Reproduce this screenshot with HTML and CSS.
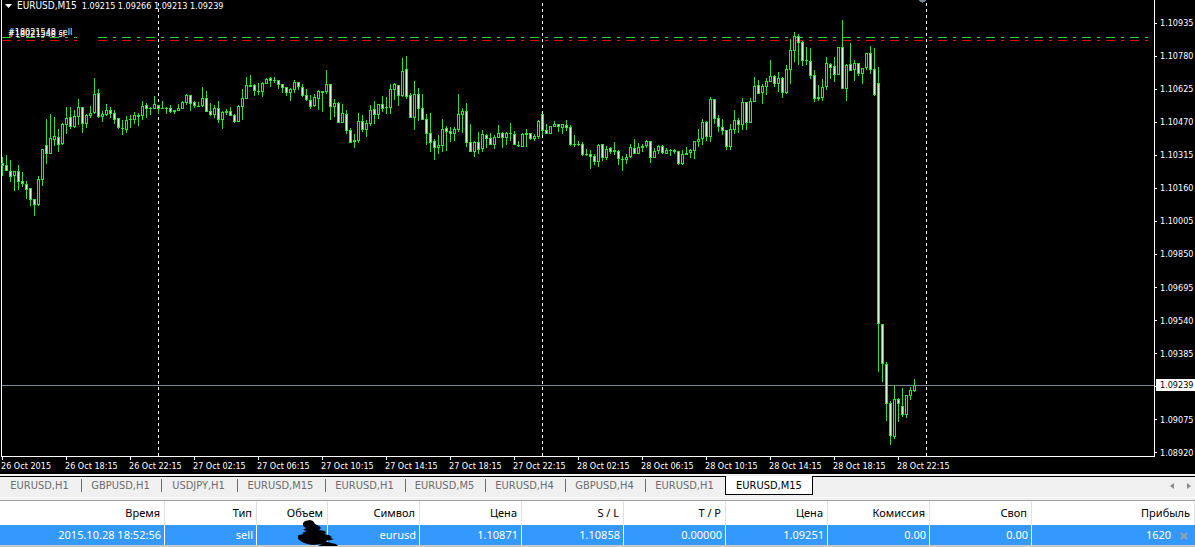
FILE: index.html
```html
<!DOCTYPE html>
<html lang="ru">
<head>
    <meta charset="UTF-8">
    <meta name="viewport" content="width=device-width, initial-scale=1.0">
    <title>EURUSD,M15</title>
    <link rel="stylesheet" href="styles.css">
</head>
<body>
    <main class="chart">
        <div class="plot">
            <svg class="plot-svg" aria-hidden="true">
                <g class="separators">
                    <line x1="158.5" y1="3" x2="158.5" y2="456"/>
                    <line x1="542.5" y1="3" x2="542.5" y2="456"/>
                    <line x1="926.5" y1="3" x2="926.5" y2="456"/>
                </g>
                <line class="price-line" x1="2" y1="385.5" x2="100%" y2="385.5"/>
                <g class="order-line">
                    <line x1="2" y1="37.5" x2="77" y2="37.5"/>
                    <line x1="98" y1="37.5" x2="99.5%" y2="37.5"/>
                </g>
                <g class="stop-line">
                    <line x1="2" y1="40.5" x2="77" y2="40.5"/>
                    <line x1="98" y1="40.5" x2="99.5%" y2="40.5"/>
                </g>
                <g id="candles"></g>
                <path class="shift-mark" d="M919 0h7v1h-1v1h-2v1h-1v-1h-2v-1h-1z"/>
            </svg>
            <h1 class="chart-title">
                <svg class="title-arrow" width="7" height="4" aria-hidden="true"><path d="M0 0h7L3.500 4z"/></svg>
                <span class="symbol">EURUSD,M15</span>
                <span>1.09215 1.09266 1.09213 1.09239</span>
            </h1>
            <span class="order-label order-open">#18021548 sell</span>
            <span class="order-label order-stop">#18021548 sl</span>
        </div>

        <div class="price-axis">
            <span>1.10935</span>
            <span>1.10780</span>
            <span>1.10625</span>
            <span>1.10470</span>
            <span>1.10315</span>
            <span>1.10160</span>
            <span>1.10005</span>
            <span>1.09850</span>
            <span>1.09695</span>
            <span>1.09540</span>
            <span>1.09385</span>
            <span></span>
            <span>1.09075</span>
            <span>1.08920</span>
            <strong class="current-price">1.09239</strong>
        </div>

        <div class="time-axis">
            <span>26 Oct 2015</span>
            <span>26 Oct 18:15</span>
            <span>26 Oct 22:15</span>
            <span>27 Oct 02:15</span>
            <span>27 Oct 06:15</span>
            <span>27 Oct 10:15</span>
            <span>27 Oct 14:15</span>
            <span>27 Oct 18:15</span>
            <span>27 Oct 22:15</span>
            <span>28 Oct 02:15</span>
            <span>28 Oct 06:15</span>
            <span>28 Oct 10:15</span>
            <span>28 Oct 14:15</span>
            <span>28 Oct 18:15</span>
            <span>28 Oct 22:15</span>
        </div>
    </main>

    <nav class="tabs">
        <button type="button" class="tab">EURUSD,H1</button>
        <button type="button" class="tab">GBPUSD,H1</button>
        <button type="button" class="tab tab-narrow">USDJPY,H1</button>
        <button type="button" class="tab tab-wide">EURUSD,M15</button>
        <button type="button" class="tab">EURUSD,H1</button>
        <button type="button" class="tab">EURUSD,M5</button>
        <button type="button" class="tab">EURUSD,H4</button>
        <button type="button" class="tab">GBPUSD,H4</button>
        <button type="button" class="tab">EURUSD,H1</button>
        <button type="button" class="tab tab-wide active">EURUSD,M15</button>
        <div class="tab-scroll">
            <button type="button" class="scroll-btn" aria-label="Назад">
                <svg width="4" height="6"><path d="M4 0v6L0 3z"/></svg>
            </button>
            <button type="button" class="scroll-btn" aria-label="Вперёд">
                <svg width="4" height="6"><path d="M0 0v6l4-3z"/></svg>
            </button>
        </div>
    </nav>

    <section class="terminal">
        <table class="orders">
            <colgroup>
                <col class="col-time">
                <col class="col-type">
                <col class="col-volume">
                <col class="col-symbol">
                <col class="col-price" span="6">
                <col>
            </colgroup>
            <thead>
                <tr>
                    <th>Время</th>
                    <th>Тип</th>
                    <th>Объем</th>
                    <th>Символ</th>
                    <th>Цена</th>
                    <th>S / L</th>
                    <th>T / P</th>
                    <th>Цена</th>
                    <th>Комиссия</th>
                    <th>Своп</th>
                    <th>Прибыль</th>
                </tr>
            </thead>
            <tbody>
                <tr>
                    <td>2015.10.28 18:52:56</td>
                    <td>sell</td>
                    <td class="volume">
                        <svg class="scribble" width="42" height="26" aria-hidden="true">
                            <path d="M5 3l2-2 5-1 3 1 2 3 4 2 2 2-2 2 6 1 1 2-2 1 5 1 3 2-2 1 4 1-3 1-6 1 6 2 5 1 2 2-4 1-8-1-3 1-5 1v-2l4-2-9 1-6-1-5-2-4-3-1-3 2-1 5-1-2-1 5-2-4-1 3-2-3-2z"/>
                        </svg>
                    </td>
                    <td>eurusd</td>
                    <td>1.10871</td>
                    <td>1.10858</td>
                    <td>0.00000</td>
                    <td>1.09251</td>
                    <td>0.00</td>
                    <td>0.00</td>
                    <td class="profit">
                        <span>1620</span>
                        <button type="button" class="close-btn" aria-label="Закрыть">
                            <svg width="8" height="8"><path d="M1 1l6 6M7 1l-6 6"/></svg>
                        </button>
                    </td>
                </tr>
            </tbody>
        </table>
    </section>

    <script src="chart.js"></script>
</body>
</html>
```

FILE: styles.css
```css
* {
    margin: 0;
    padding: 0;
    box-sizing: border-box;
}

body {
    font-family: "DejaVu Sans Condensed", "DejaVu Sans", sans-serif;
    font-size: 11px;
    background: #f0f0f0;
    color: #000;
}

button {
    font: inherit;
    border: none;
    background: none;
    cursor: pointer;
}

/* chart */
.chart {
    display: grid;
    grid-template-columns: 1fr 40px;
    grid-template-rows: 457px 17px;
    background: #000;
    color: #fff;
    font-size: 9px;
    line-height: 12px;
}

.plot {
    position: relative;
    margin-left: 1px;
    border: 1px solid #fff;
    border-top: none;
}

.plot-svg {
    position: absolute;
    top: 0;
    left: -2px;
    width: calc(100% + 2px);
    height: 100%;
    shape-rendering: crispEdges;
}

.separators line {
    stroke: #fff;
    stroke-dasharray: 3 3;
}

.price-line {
    stroke: #778899;
}

.order-line line,
.stop-line line {
    stroke: #32cd32;
    stroke-dasharray: 9 6 3 6;
}

.stop-line line {
    stroke: #f00;
}

.shift-mark {
    fill: #778899;
}

.wick {
    stroke: #3cd83c;
}

.bull,
.bear {
    fill: #0cff0c;
}

.bull-core {
    fill: #001c00;
}

.bear-core {
    fill: #c8ffc8;
}

.chart-title {
    position: relative;
    display: flex;
    align-items: center;
    gap: 5px;
    padding-left: 3px;
    font-size: 9px;
    font-weight: normal;
}

.title-arrow {
    fill: #fff;
}

.symbol {
    font-size: 10px;
}

.order-label {
    position: absolute;
    left: 6px;
}

.order-open {
    top: 26px;
}

.order-stop {
    top: 28px;
}

.price-axis {
    position: relative;
    display: flex;
    flex-direction: column;
    justify-content: space-between;
    padding-top: 17px;
    margin-bottom: -2px;
}

.price-axis span {
    display: flex;
    align-items: center;
    gap: 3px;
    height: 12px;
}

.price-axis span::before {
    content: "";
    width: 2px;
    height: 1px;
    background: #fff;
}

.current-price {
    position: absolute;
    top: 379px;
    left: 1px;
    right: 0;
    padding-left: 4px;
    background: #fff;
    color: #000;
    font-weight: normal;
}

.time-axis {
    grid-column: 1 / -1;
    display: flex;
    padding-left: 1px;
}

.time-axis span {
    position: relative;
    width: 64px;
    padding-top: 3px;
    white-space: nowrap;
}

.time-axis span::before {
    content: "";
    position: absolute;
    top: 0;
    left: 1px;
    width: 1px;
    height: 3px;
    background: #fff;
}

/* chart tabs */
.tabs {
    display: flex;
    height: 22px;
    margin-top: 2px;
    border-top: 1px solid #000;
    border-bottom: 1px solid #fff;
}

.tab {
    position: relative;
    width: 80px;
    height: 18px;
    padding: 0 3px 2px 0;
    color: #6d6d6d;
    white-space: nowrap;
}

.tab:first-child {
    width: 82px;
}

.tab-narrow {
    width: 76px;
}

.tab-wide {
    width: 88px;
}

.tab::after {
    content: "";
    position: absolute;
    right: 0;
    top: 2px;
    width: 1px;
    height: 13px;
    background: #6d6d6d;
}

.tab.active {
    height: 19px;
    margin-top: -1px;
    margin-left: -1px;
    padding: 0;
    border: 1px solid #000;
    border-top: none;
    background: #fff;
    color: #000;
}

.tab.active::after {
    display: none;
}

.tab-scroll {
    display: flex;
    align-items: center;
    gap: 13px;
    height: 18px;
    margin-left: auto;
    padding-right: 4px;
    fill: #8c8c8c;
}

.scroll-btn {
    display: flex;
}

/* orders table */
.terminal {
    margin-top: 2px;
    border-top: 1px solid #a0a0a0;
    border-bottom: 2px solid #c8c8c8;
    background: #fff;
}

.orders {
    width: 100%;
    table-layout: fixed;
    border-collapse: separate;
    border-spacing: 0;
    font-family: "Noto Sans", sans-serif;
}

.col-time {
    width: 165px;
}

.col-type {
    width: 92px;
}

.col-volume {
    width: 71px;
}

.col-symbol {
    width: 92px;
}

.col-price {
    width: 102px;
}

.orders th {
    height: 24px;
    padding: 0 4px 2px 0;
    border-right: 1px solid #e0e0e0;
    font-weight: normal;
    text-align: right;
}

.orders td {
    height: 20px;
    padding: 0 3px 2px 0;
    border-right: 1px solid #fff;
    background: #3399ff;
    color: #fff;
    text-align: right;
    line-height: 15px;
}

.volume {
    position: relative;
}

.scribble {
    position: absolute;
    left: 41px;
    top: -5px;
}

.orders .profit {
    padding-right: 7px;
    border-right: none;
}

.close-btn {
    margin-left: 6px;
    vertical-align: middle;
}

.close-btn svg {
    display: block;
    fill: none;
    stroke: #a0a0a0;
    stroke-width: 2;
}
```

FILE: chart.js
```js
// one bar per entry: high, body top, body bottom, low, direction (1 up, 0 down)
const bars = [
    [157,163,166,176,0],[155,165,171,171,0],[160,171,177,182,0],[171,171,176,191,1],[165,171,182,190,0],
    [172,181,184,187,0],[181,184,190,199,0],[188,188,200,206,0],[199,199,205,216,0],[176,179,205,206,1],
    [149,149,180,186,1],[119,145,154,164,0],[114,138,154,154,1],[117,136,140,146,1],[129,137,145,152,0],
    [123,124,144,145,1],[107,118,125,134,1],[107,117,127,129,0],[110,116,127,128,1],[99,107,117,125,1],
    [107,107,124,133,0],[114,115,124,128,1],[106,113,116,118,1],[78,94,113,114,1],[89,93,117,118,0],
    [111,114,117,122,1],[104,110,115,116,1],[107,110,114,118,0],[110,113,120,124,0],[118,118,128,129,0],
    [120,128,129,135,0],[116,120,130,133,1],[115,119,120,128,0],[112,115,120,124,1],[113,115,117,126,0],
    [101,106,116,120,1],[103,105,109,118,0],[107,108,109,115,0],[96,104,109,109,1],[105,105,109,114,0],
    [101,108,109,109,0],[107,108,109,114,0],[105,108,112,113,0],[110,110,112,114,0],[104,108,111,111,1],
    [101,102,109,109,1],[94,95,103,105,1],[95,95,104,111,0],[101,102,106,108,0],[102,106,107,107,0],
    [87,98,106,107,1],[91,98,112,112,0],[103,111,115,116,0],[105,108,115,118,1],[101,108,120,123,0],
    [111,112,120,129,1],[109,111,113,115,0],[107,111,116,116,0],[114,115,122,123,0],[105,106,122,122,1],
    [89,98,107,120,1],[77,85,99,99,1],[75,85,87,87,0],[84,85,91,96,0],[83,91,92,95,0],
    [82,83,92,97,1],[78,79,84,84,1],[77,78,81,87,0],[77,80,81,83,0],[80,80,85,89,0],
    [84,84,88,93,0],[87,87,93,96,0],[88,89,93,101,1],[80,82,90,93,1],[82,82,87,90,0],
    [84,87,96,97,0],[89,95,100,101,0],[95,100,107,109,0],[94,97,106,107,1],[90,91,99,110,1],
    [91,91,93,112,0],[70,84,92,94,1],[84,84,107,120,0],[99,103,107,117,1],[102,103,123,123,0],
    [104,113,123,123,1],[110,114,131,134,0],[128,130,143,143,0],[134,140,142,148,0],[113,121,141,143,1],
    [115,121,130,132,0],[120,123,130,137,1],[105,110,124,126,1],[101,109,115,124,0],[104,104,115,119,1],
    [96,104,109,112,0],[97,107,108,114,0],[84,89,108,114,1],[83,84,90,100,1],[85,85,96,106,0],
    [58,71,96,97,1],[56,69,97,99,0],[93,95,118,118,0],[81,94,118,130,1],[88,94,109,121,0],
    [94,108,120,120,0],[114,119,134,145,0],[113,133,143,152,0],[139,141,148,160,0],[135,145,148,154,1],
    [119,129,146,152,1],[126,128,132,151,0],[127,131,134,142,0],[127,129,134,141,1],[94,114,130,132,1],
    [108,111,115,133,1],[103,111,143,147,0],[124,142,152,152,0],[141,142,152,157,1],[132,142,150,154,0],
    [130,134,149,152,1],[134,135,139,148,0],[133,138,145,145,0],[135,137,145,149,1],[125,133,138,138,1],
    [132,133,138,148,0],[132,133,138,145,1],[123,133,134,141,0],[131,134,145,145,0],[141,145,146,147,0],
    [133,134,147,147,1],[129,133,135,147,0],[133,133,139,140,0],[134,136,139,141,1],[120,121,137,139,1],
    [114,114,131,135,0],[124,130,134,134,0],[126,126,134,134,1],[121,124,127,127,1],[124,124,127,132,0],
    [124,124,128,134,1],[120,125,128,131,0],[125,127,145,146,0],[135,144,145,147,0],[141,144,145,146,0],
    [142,144,155,156,0],[149,154,155,156,0],[150,154,157,169,0],[154,156,162,165,0],[144,145,162,167,1],
    [144,144,158,161,0],[146,149,158,160,1],[147,148,152,154,0],[142,150,152,155,0],[150,151,159,165,0],
    [156,159,160,171,0],[154,157,160,164,1],[144,147,157,158,1],[139,148,154,154,0],[143,147,154,154,1],
    [144,146,148,152,0],[140,141,146,148,1],[141,141,158,163,0],[148,151,158,158,1],[145,146,151,154,1],
    [145,146,153,154,0],[148,150,154,154,1],[149,150,151,156,0],[149,150,152,154,0],[151,151,164,165,0],
    [150,154,164,165,1],[147,153,155,155,0],[149,150,153,158,1],[141,141,151,159,1],[129,139,142,147,1],
    [119,122,139,145,1],[121,122,137,141,0],[97,99,137,142,1],[99,99,119,124,0],[115,118,127,132,0],
    [119,127,131,135,0],[130,130,147,150,0],[124,129,147,150,1],[110,120,130,134,1],[118,120,125,133,0],
    [98,102,125,130,1],[102,102,123,130,0],[98,101,123,123,1],[77,86,102,102,1],[80,85,94,94,0],
    [84,86,93,104,1],[78,81,87,95,1],[60,76,82,82,1],[75,76,84,87,0],[72,78,84,92,1],
    [77,78,93,98,0],[65,69,93,94,1],[39,50,70,84,1],[32,36,51,62,1],[34,36,43,65,0],
    [41,42,61,66,0],[47,60,61,65,0],[48,61,76,79,0],[70,75,99,102,0],[85,97,99,101,0],
    [79,87,98,101,1],[57,63,87,90,1],[63,64,68,79,0],[57,66,75,82,0],[47,47,75,75,1],
    [20,47,89,89,0],[64,65,89,101,1],[43,64,71,71,0],[60,63,70,81,1],[63,63,74,76,0],
    [68,68,74,84,1],[53,53,68,70,1],[46,53,70,74,0],[48,69,95,96,0],[67,83,324,372,0],
    [324,324,364,382,0],[362,364,404,421,0],[401,403,436,445,0],[386,399,437,439,1],[398,399,404,422,0],
    [388,406,415,417,0],[395,395,415,418,1],[387,390,396,400,1],[379,385,391,392,1]
];

const svgNS = 'http://www.w3.org/2000/svg';
const group = document.getElementById('candles');
const step = 4;

function addRect(className, x, y, width, height) {
    const rect = document.createElementNS(svgNS, 'rect');
    rect.setAttribute('class', className);
    rect.setAttribute('x', x);
    rect.setAttribute('y', y);
    rect.setAttribute('width', width);
    rect.setAttribute('height', height);
    group.appendChild(rect);
}

bars.forEach(([high, top, bottom, low, up], i) => {
    const x = 2 + i * step;
    const wick = document.createElementNS(svgNS, 'line');
    wick.setAttribute('class', 'wick');
    wick.setAttribute('x1', x + 0.5);
    wick.setAttribute('x2', x + 0.5);
    wick.setAttribute('y1', high);
    wick.setAttribute('y2', low);
    group.appendChild(wick);

    addRect(up ? 'bull' : 'bear', x - 1, top, 3, bottom - top);
    if (bottom - top > 2) {
        addRect(up ? 'bull-core' : 'bear-core', x, top + 1, 1, bottom - top - 2);
    }
});
```
